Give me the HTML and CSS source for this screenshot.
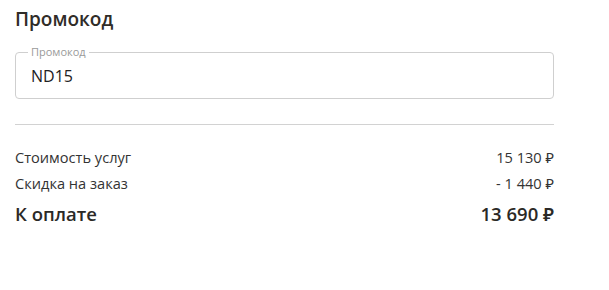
FILE: index.html
```html
<!DOCTYPE html>
<html lang="ru">
<head>
<meta charset="utf-8">
<link rel="stylesheet" href="styles.css">
</head>
<body>
<div class="promo">
  <h2 class="title">Промокод</h2>
  <div class="field">
    <span class="field-label">Промокод</span>
    <div class="field-value">ND15</div>
  </div>
  <hr class="divider">
  <div class="row"><span>Стоимость услуг</span><span>15 130 ₽</span></div>
  <div class="row"><span>Скидка на заказ</span><span>- 1 440 ₽</span></div>
  <div class="row total"><span>К оплате</span><span>13 690 ₽</span></div>
</div>
</body>
</html>
```
FILE: styles.css
```css
html, body {
  margin: 0;
  padding: 0;
  background: #fff;
}
body {
  font-family: "Open Sans", "Noto Sans", sans-serif;
  color: #333;
}
.promo {
  width: 539px;
  padding: 7px 0 0 15px;
}
.title {
  margin: 0;
  font-size: 19px;
  line-height: 24px;
  font-weight: 600;
  color: #302c28;
}
.field {
  position: relative;
  margin-top: 21px;
  border: 1px solid #cfcfcf;
  border-radius: 4px;
  padding: 13px 15px 12px;
}
.field-label {
  position: absolute;
  top: -8px;
  left: 12px;
  padding: 0 3px;
  background: #fff;
  font-size: 11px;
  line-height: 14px;
  color: #9a9a9a;
}
.field-value {
  font-size: 16px;
  line-height: 20px;
  color: #222;
}
.divider {
  margin: 25px 0 19px;
  border: 0;
  height: 1px;
  background: #d2d2d2;
}
.row {
  display: flex;
  justify-content: space-between;
  font-size: 14.6px;
  line-height: 26px;
  color: #333;
}
.row.total {
  margin-top: 3px;
  font-size: 18.5px;
  line-height: 30px;
  font-weight: 600;
  color: #2b2926;
}
```
